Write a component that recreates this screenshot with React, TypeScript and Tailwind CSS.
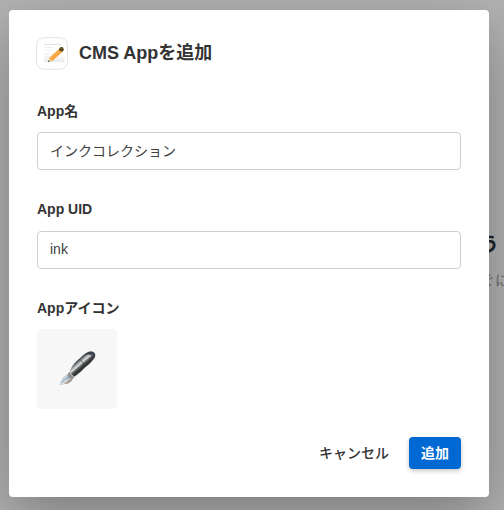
type FieldProps = {
  id: string;
  label: string;
  value: string;
};

const MemoIcon = () => (
  <svg width="32" height="33" viewBox="0 0 32 33" aria-hidden="true">
    <defs>
      <linearGradient id="memo-paper" x1="0" y1="0" x2="0" y2="1">
        <stop offset="0.5" stopColor="#ffffff" />
        <stop offset="1" stopColor="#e5e5e5" />
      </linearGradient>
    </defs>
    <rect x="0.5" y="0.7" width="31" height="31.500" rx="7.500" fill="#fff" stroke="#e4e4e4" />
    <path d="M8 7h17l4 18H8Z" fill="url(#memo-paper)" opacity="0.8" />
    <path d="M8 7.500h17" stroke="#dadada" strokeWidth="0.8" />
    <path
      d="M8 10.500h9M8 13.500h8M8 16.500h6M8 19.500h5M8 22.500h3"
      stroke="#ececec"
      strokeWidth="0.8"
    />
    <path d="m12 25 1.100-4 3.200 3Z" fill="#efcf9f" />
    <path d="m13.100 21 9.700-8.900 3.500 3-10 8.900Z" fill="#f7a53e" />
    <path d="m14.300 21.500 9.500-8.700" stroke="#ffbd66" strokeWidth="0.8" />
    <path d="m12 25 .5-1.800 1.400 1.300Z" fill="#4b4541" />
    <path d="m22.800 12.100 1.500-1.400 3.300 3-1.300 1.400Z" fill="#9a8758" />
    <circle cx="25.500" cy="12.300" r="2.200" fill="#55481f" />
    <path d="m24.800 11.100 1.200 1" stroke="#8b7a35" strokeWidth="0.8" />
  </svg>
);

const PenIcon = () => (
  <svg width="80" height="80" viewBox="0 0 80 80" aria-hidden="true">
    <defs>
      <linearGradient
        id="pen-body"
        x1="41"
        y1="32"
        x2="48"
        y2="40"
        gradientUnits="userSpaceOnUse"
      >
        <stop offset="0" stopColor="#55585a" />
        <stop offset="0.18" stopColor="#a4a7a9" />
        <stop offset="0.35" stopColor="#dddede" />
        <stop offset="0.5" stopColor="#6b6d6e" />
        <stop offset="0.7" stopColor="#303132" />
        <stop offset="1" stopColor="#454647" />
      </linearGradient>
      <linearGradient
        id="pen-nib"
        x1="26"
        y1="47"
        x2="32"
        y2="54"
        gradientUnits="userSpaceOnUse"
      >
        <stop offset="0" stopColor="#7f858b" />
        <stop offset="0.28" stopColor="#d5e2ec" />
        <stop offset="0.48" stopColor="#7fa5cb" />
        <stop offset="0.65" stopColor="#d3c6ba" />
        <stop offset="1" stopColor="#85807b" />
      </linearGradient>
    </defs>
    <path d="m23 56 1.500-5q1-3 7-6l4.500 4.500q-1 3-5 5Z" fill="url(#pen-nib)" />
    <path d="m24 55.500 6-5" stroke="#ecece9" strokeWidth="1.100" />
    <path d="m31 44.500 2.500-2.500 5 5-3 3q-3 0-5-3Z" fill="#8b8d90" />
    <path d="m32.500 43.500 4.500 4.500" stroke="#cccfd1" strokeWidth="0.900" />
    <path
      d="M33 41.500q3-7 10-12.500 6-6 10-6.500 4-.5 5 2 1 3-2 6.500-3 4-8 7.500-5 5.500-9 8-2 1.500-4-1-2-2-2-4Z"
      fill="url(#pen-body)"
    />
    <path d="M47 26q4-3.500 7-3.500 4 0 4 3.500 0 3-3 5 1-4-1-5-3-1-7 0Z" fill="#3b4148" />
    <path d="M42.500 30.500q4.500 2 5 7" fill="none" stroke="#242729" strokeWidth="1" opacity="0.45" />
    <path d="m54 26 2.500-1" stroke="#59677f" />
  </svg>
);

const Field = ({ id, label, value }: FieldProps) => (
  <div className="mb-[29.2px]">
    <label htmlFor={id} className="block h-5 text-sm leading-5 font-bold">
      {label}
    </label>
    <input
      id={id}
      defaultValue={value}
      className="mt-[11.2px] block h-[38.4px] w-full rounded border border-[#cfcfcf] bg-white px-3 pb-0.5 text-sm text-[#404040] outline-none"
    />
  </div>
);

export default function App() {
  return (
    <div className="relative h-[510px] w-[504px] overflow-hidden bg-[#b2b2b2] font-['Liberation_Sans','Noto_Sans_CJK_JP',sans-serif] text-[#333]">
      <div className="flex flex-col items-end pt-[231px]">
        <p className="mr-[5px] text-xl leading-7 font-bold text-[#20252b]">よう</p>
        <p className="-mr-[5px] mt-[11px] text-sm leading-5 text-[#696969]">すぐに</p>
      </div>

      <div
        role="dialog"
        aria-labelledby="dialog-title"
        className="absolute top-[10.4px] left-[9px] w-[480px] rounded bg-white px-7 pt-[26.6px] pb-7 shadow-[0_20px_60px_rgba(0,0,0,0.3)]"
      >
        <header className="-ml-px flex h-[33px] items-center gap-[11px]">
          <MemoIcon />
          <h1 id="dialog-title" className="text-lg leading-7 font-bold">
            CMS Appを追加
          </h1>
        </header>

        <div className="mt-[30.6px]">
          <Field id="app-name" label="App名" value="インクコレクション" />
          <Field id="app-uid" label="App UID" value="ink" />
          <p className="h-5 text-sm leading-5 font-bold">Appアイコン</p>
          <button
            type="button"
            aria-label="Appアイコン"
            className="mt-[11px] block size-20 rounded bg-[#f7f7f7]"
          >
            <PenIcon />
          </button>
        </div>

        <footer className="mt-7 flex justify-end gap-5 text-sm">
          <button type="button" className="h-8 pb-px font-medium">
            キャンセル
          </button>
          <button
            type="button"
            className="h-8 w-[52px] rounded bg-[#0068d2] pb-px font-bold text-white shadow-[0_2px_5px_rgba(0,0,0,0.22)]"
          >
            追加
          </button>
        </footer>
      </div>
    </div>
  );
}
